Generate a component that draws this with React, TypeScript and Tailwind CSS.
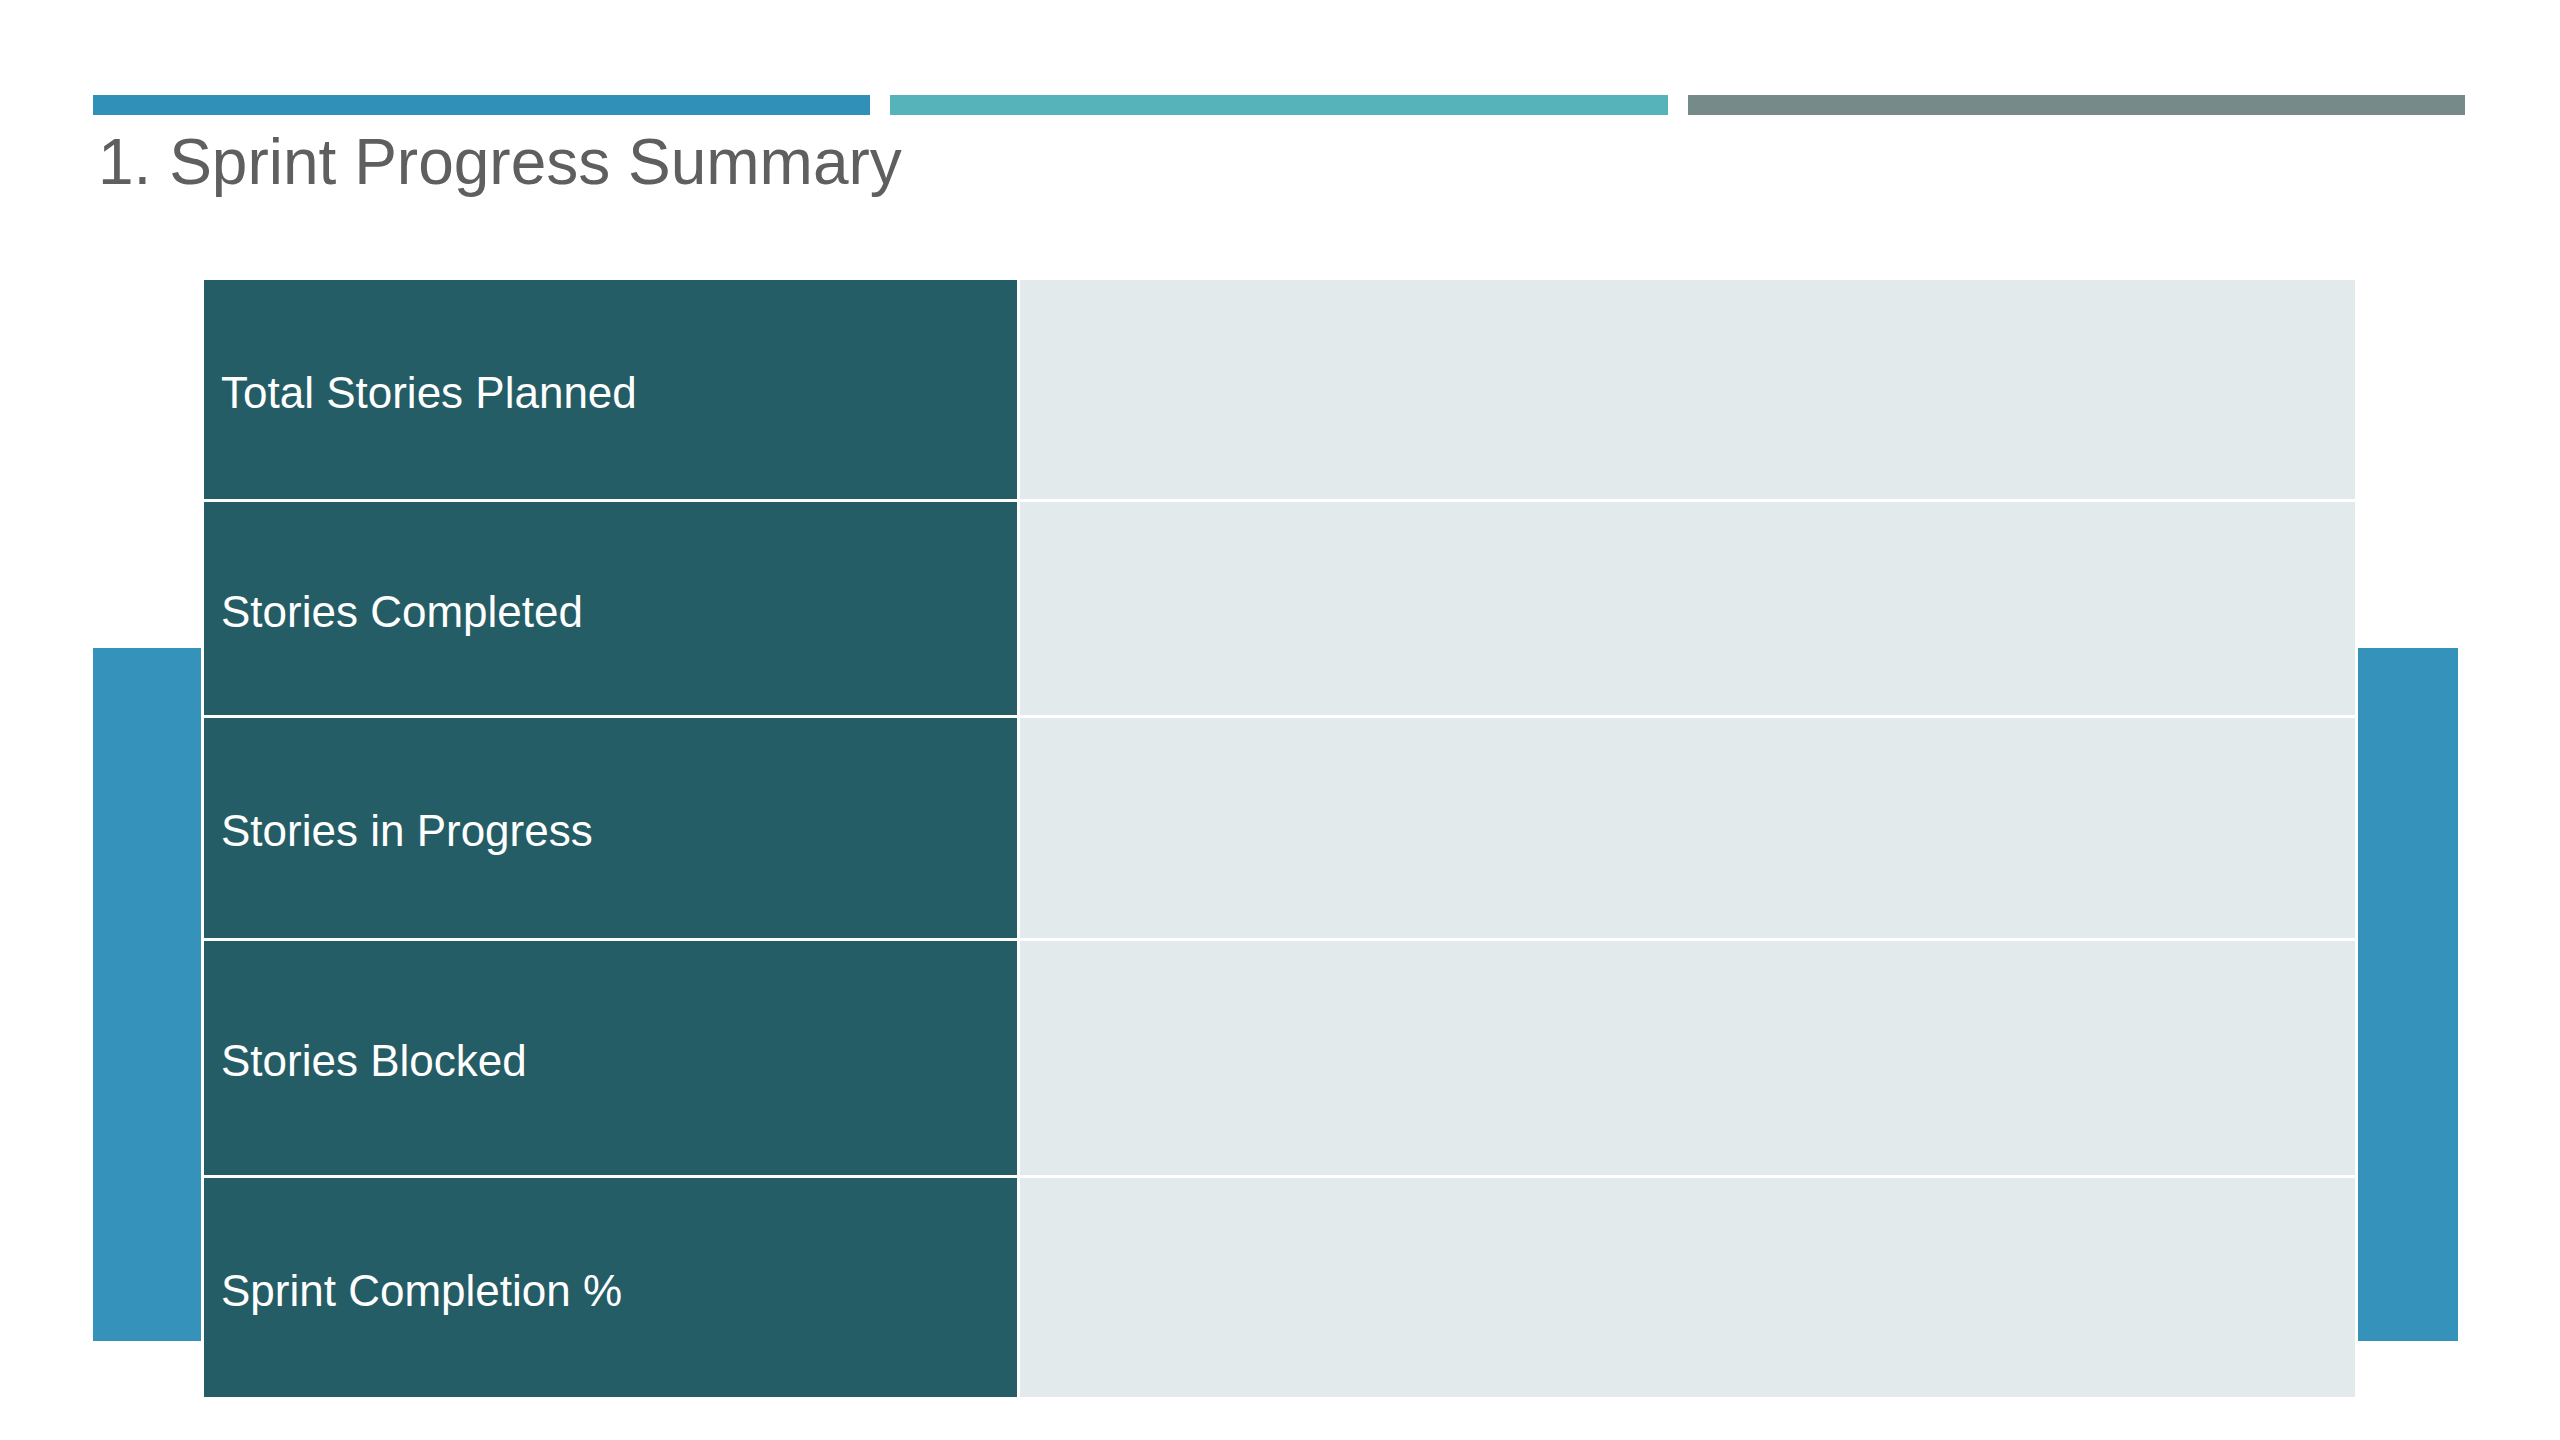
const rows = [
  { label: "Total Stories Planned", h: "h-[219px]" },
  { label: "Stories Completed", h: "h-[213px]" },
  { label: "Stories in Progress", h: "h-[220px]" },
  { label: "Stories Blocked", h: "h-[234px]" },
  { label: "Sprint Completion %", h: "h-[219px]" },
];

export default function App() {
  return (
    <div className="w-[2560px] h-[1440px] bg-white overflow-hidden font-['Liberation_Sans',Arial,sans-serif]">
      <div className="flex gap-[20px] pt-[95px] px-[93px] pr-[95px]">
        <div className="flex-1 h-[20px] bg-[#3190b8]" />
        <div className="flex-1 h-[20px] bg-[#55b3b9]" />
        <div className="flex-1 h-[20px] bg-[#778a8a]" />
      </div>

      <h1 className="mt-[15px] ml-[98px] text-[64px] leading-[64px] text-[#5f5f5f] font-normal">
        1. Sprint Progress Summary
      </h1>

      <div className="flex items-start gap-[3px] mt-[86px] ml-[93px]">
        <div className="w-[108px] h-[693px] mt-[368px] bg-[#3592ba]" />

        <div className="w-[2151px] grid grid-cols-[813px_1335px] gap-[3px] bg-white">
          {rows.map((row) => (
            <div key={row.label} className="contents">
              <div
                className={`${row.h} bg-[#245d65] flex items-center pl-[17px] pt-[6px] text-white text-[44px] leading-none`}
              >
                {row.label}
              </div>
              <div className={`${row.h} bg-[#e3eaec]`} />
            </div>
          ))}
        </div>

        <div className="w-[100px] h-[693px] mt-[368px] bg-[#3592ba]" />
      </div>
    </div>
  );
}
